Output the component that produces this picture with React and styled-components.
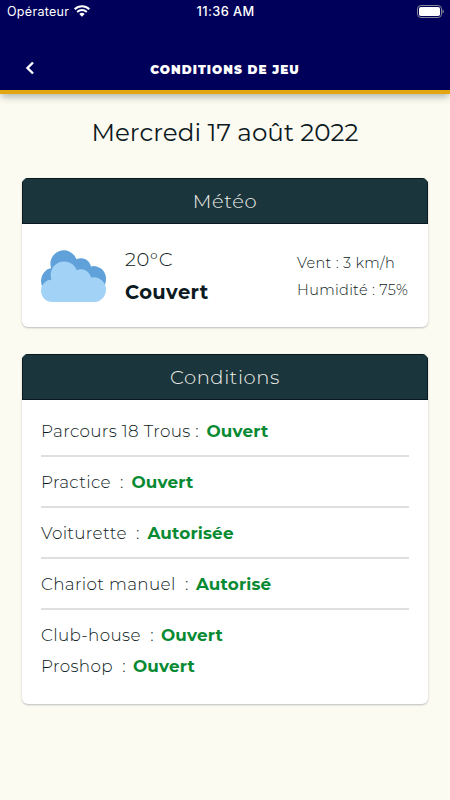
import React from "react";
import styled, { createGlobalStyle } from "styled-components";

const GlobalStyle = createGlobalStyle`
  * { box-sizing: border-box; }
  body { margin: 0; background: #fcfbf2; }
`;

const Screen = styled.div`
  width: 450px;
  height: 800px;
  overflow: hidden;
  background: #fcfbf2;
  color: #0c1a22;
  font-family: "Montserrat", "Inter", sans-serif;
`;

const Header = styled.header`
  height: 94px;
  background: #00005a;
  border-bottom: 4px solid #e2a612;
  box-shadow: 0 4px 7px -1px rgba(40, 60, 60, 0.36);
  color: #fff;
`;

const StatusBar = styled.div`
  display: grid;
  grid-template-columns: 1fr auto 1fr;
  align-items: center;
  height: 23px;
  padding: 0 6px 0 7px;
  font: 400 12.5px/23px "Inter", sans-serif;
`;

const Carrier = styled.div`
  display: flex;
  align-items: center;
  gap: 5px;
  letter-spacing: 0.3px;
`;

const WifiIcon = styled.svg`
  margin-top: -2px;
`;

const Clock = styled.div`
  font-size: 12.8px;
  font-weight: 500;
  letter-spacing: 0.4px;
`;

const Battery = styled.div`
  display: flex;
  justify-content: flex-end;
  margin-top: -1px;
`;

const NavBar = styled.div`
  display: grid;
  grid-template-columns: 60px 1fr 60px;
  align-items: center;
  height: 67px;
  padding-top: 24px;
`;

const BackButton = styled.button`
  display: flex;
  justify-content: center;
  margin-top: -2px;
  padding: 0;
  border: 0;
  background: none;
  color: #fff;
`;

const NavTitle = styled.h1`
  margin: 2px 0 0;
  font-size: 12px;
  font-weight: 900;
  line-height: 16px;
  letter-spacing: 1.05px;
  text-align: center;
  white-space: nowrap;
`;

const Content = styled.main`
  padding: 18px 22px 0;
`;

const DateHeading = styled.h2`
  height: 66px;
  margin: 0;
  font-size: 24.6px;
  font-weight: 400;
  line-height: 41px;
  letter-spacing: 0.02px;
  text-align: center;
`;

const Card = styled.section`
  margin-bottom: ${(p) => p.$gap || 0}px;
  height: ${(p) => p.$height}px;
  border-radius: 6px;
  overflow: hidden;
  background: #fff;
  box-shadow: 0 1px 2px rgba(30, 50, 55, 0.3);
`;

const CardTitle = styled.h3`
  height: 46px;
  margin: 0;
  background: #1b353c;
  border: 1px solid #08191f;
  color: #f1f0ea;
  font-size: 19.5px;
  font-weight: 300;
  line-height: 44px;
  letter-spacing: 0.6px;
  text-align: center;
`;

const Weather = styled.div`
  display: grid;
  grid-template-columns: 65px 172px 1fr;
  padding: 20px 0 0 19px;
`;

const CloudIcon = styled.svg`
  display: block;
  margin-top: 6px;
`;

const Summary = styled.div`
  padding-left: 19px;
  font-size: 19.5px;
  line-height: 32px;
`;

const Temperature = styled.div`
  margin: -1px 0 1px;
  font-weight: 300;
  letter-spacing: 0.5px;
`;

const Sky = styled.div`
  font-weight: 700;
  letter-spacing: 0.4px;
`;

const Details = styled.div`
  padding: 6px 0 0 19px;
  font-size: 14.5px;
  font-weight: 300;
  line-height: 27px;
  letter-spacing: 0.33px;
  white-space: nowrap;
`;

const Group = styled.div`
  margin: 0 19px;
  padding: ${(p) => (p.$first ? "15px" : "9px")} 0 8px;
  border-bottom: ${(p) => (p.$last ? "0" : "2px solid #dfe0de")};
`;

const Row = styled.div`
  display: flex;
  height: ${(p) => p.$height || 32}px;
  font-size: 16.8px;
  line-height: 32px;
  white-space: pre;
`;

const Label = styled.span`
  width: ${(p) => p.$width}px;
  font-weight: 300;
  letter-spacing: 0.35px;
`;

const Value = styled.span`
  color: #078a32;
  font-weight: 700;
  letter-spacing: 0.18px;
`;

const groups = [
  [{ label: "Parcours 18 Trous :", value: "Ouvert", width: 165.5 }],
  [{ label: "Practice  :", value: "Ouvert", width: 90.5 }],
  [{ label: "Voiturette  :", value: "Autorisée", width: 106.5 }],
  [{ label: "Chariot manuel  :", value: "Autorisé", width: 155 }],
  [
    { label: "Club-house  :", value: "Ouvert", width: 120 },
    { label: "Proshop  :", value: "Ouvert", width: 92 },
  ],
];

export default function App() {
  return (
    <Screen>
      <GlobalStyle />
      <Header>
        <StatusBar>
          <Carrier>
            Opérateur
            <WifiIcon width="16" height="12" viewBox="0 0 16 12" fill="none" stroke="#fff" strokeWidth="2">
              <path d="M.7 4.2a10.5 10.5 0 0 1 14.6 0M3.2 6.9a7 7 0 0 1 9.6 0" />
              <path d="M5.3 9.1a4 4 0 0 1 5.4 0L8 11.8Z" fill="#fff" stroke="none" />
            </WifiIcon>
          </Carrier>
          <Clock>11:36 AM</Clock>
          <Battery>
            <svg width="27" height="13" viewBox="0 0 27 13">
              <rect x=".5" y=".5" width="24" height="12" rx="3.4" fill="none" stroke="#858798" />
              <rect x="2" y="2" width="21" height="9" rx="1.8" fill="#fff" />
              <path d="M25.5 4.5q1.4.5 1.4 2t-1.4 2Z" fill="#858798" />
            </svg>
          </Battery>
        </StatusBar>
        <NavBar>
          <BackButton aria-label="Retour">
            <svg width="10" height="14" viewBox="0 0 10 14" fill="none" stroke="currentColor" strokeWidth="2.4">
              <path d="M8 1.5 2.5 7 8 12.5" />
            </svg>
          </BackButton>
          <NavTitle>CONDITIONS DE JEU</NavTitle>
        </NavBar>
      </Header>
      <Content>
        <DateHeading>Mercredi 17 août 2022</DateHeading>
        <Card $height={149} $gap={27}>
          <CardTitle>Météo</CardTitle>
          <Weather>
            <CloudIcon width="65" height="53" viewBox="0 0 65 53">
              <path
                fill="#60a1da"
                d="M12 43.5A12.5 12.5 0 0 1 0 31A12.8 12.8 0 0 1 10.2 18.1A13.2 13.2 0 0 1 35.5 9.3A10.2 10.2 0 0 1 50 16.4A12.3 12.3 0 0 1 65 28.5Q65 41 53 43.5Z"
              />
              <path
                fill="#a3d2f7"
                d="M11.3 52A11.3 11.3 0 0 1 0 40.7A11.3 11.3 0 0 1 10.5 29.4A13.2 13.2 0 0 1 35.7 20.3A10.2 10.2 0 0 1 50 27.6A12.3 12.3 0 0 1 65 39.7A12.3 12.3 0 0 1 52.7 52Z"
              />
            </CloudIcon>
            <Summary>
              <Temperature>20°C</Temperature>
              <Sky>Couvert</Sky>
            </Summary>
            <Details>
              <div>Vent : 3 km/h</div>
              <div>Humidité : 75%</div>
            </Details>
          </Weather>
        </Card>
        <Card $height={350}>
          <CardTitle>Conditions</CardTitle>
          {groups.map((rows, i) => (
            <Group key={i} $first={i === 0} $last={i === groups.length - 1}>
              {rows.map((r) => (
                <Row key={r.label} $height={rows.length > 1 ? 31 : 32}>
                  <Label $width={r.width}>{r.label}</Label>
                  <Value>{r.value}</Value>
                </Row>
              ))}
            </Group>
          ))}
        </Card>
      </Content>
    </Screen>
  );
}
